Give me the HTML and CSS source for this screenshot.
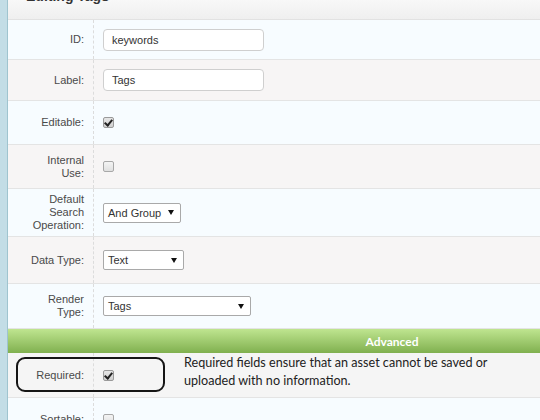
FILE: index.html
```html
<!DOCTYPE html>
<html>
<head>
<meta charset="utf-8">
<link rel="stylesheet" href="styles.css">
</head>
<body>
<div class="page">
  <div class="strip"></div>
  <div class="panel">
    <div class="panel-head"><h2>Editing Tags</h2></div>

    <div class="row blue h-id">
      <div class="lbl">ID:</div>
      <div class="val"><input class="text-input" type="text" value="keywords"></div>
    </div>

    <div class="row gray h-label">
      <div class="lbl">Label:</div>
      <div class="val"><input class="text-input" type="text" value="Tags"></div>
    </div>

    <div class="row blue h-check">
      <div class="lbl">Editable:</div>
      <div class="val"><span class="cb checked"></span></div>
    </div>

    <div class="row gray h-check">
      <div class="lbl">Internal<br>Use:</div>
      <div class="val"><span class="cb"></span></div>
    </div>

    <div class="row blue h-default">
      <div class="lbl">Default<br>Search<br>Operation:</div>
      <div class="val"><div class="select w-and"><span>And Group</span><i class="arrow"></i></div></div>
    </div>

    <div class="row gray h-data">
      <div class="lbl">Data Type:</div>
      <div class="val"><div class="select w-text"><span>Text</span><i class="arrow"></i></div></div>
    </div>

    <div class="row blue h-render">
      <div class="lbl">Render<br>Type:</div>
      <div class="val"><div class="select w-tags"><span>Tags</span><i class="arrow"></i></div></div>
    </div>

    <div class="section">Advanced</div>

    <div class="row req h-req">
      <div class="lbl">Required:</div>
      <div class="val val-req">
        <span class="cb checked"></span>
        <p class="desc">Required fields ensure that an asset cannot be saved or<br>uploaded with no information.</p>
      </div>
      <div class="callout"></div>
    </div>

    <div class="row blue h-check">
      <div class="lbl">Sortable:</div>
      <div class="val"><span class="cb"></span></div>
    </div>
  </div>
</div>
</body>
</html>
```

FILE: styles.css
```css
html, body {
  margin: 0;
  padding: 0;
  overflow: hidden;
  background: #ffffff;
}

body {
  font-family: "Liberation Sans", Arial, sans-serif;
  font-size: 11px;
  color: #444;
}

.page {
  display: flex;
  width: 776px;
  min-height: 420px;
}

.strip {
  flex: 0 0 7px;
  background: #c3dde6;
  border-right: 1px solid #9fc4cf;
}

.panel {
  flex: 1;
  display: flex;
  flex-direction: column;
}

.panel-head {
  box-sizing: border-box;
  height: 20px;
  background: linear-gradient(#f8f8f8, #efefef);
  border-bottom: 1px solid #e2e2e2;
  padding-left: 18px;
  overflow: hidden;
}

.panel-head h2 {
  margin: -12px 0 0 0;
  font-size: 14px;
  line-height: 16px;
  font-weight: bold;
  color: #333;
}

.row {
  position: relative;
  box-sizing: border-box;
  display: grid;
  grid-template-columns: 86px 1fr;
  border-bottom: 1px solid #e4e4e4;
}

.blue { background: #f7fcff; }
.gray { background: #f7f5f5; }
.req  { background: #f5f5f5; }

.h-id      { height: 40px; }
.h-label   { height: 41px; }
.h-check   { height: 44px; }
.h-default { height: 48px; }
.h-data    { height: 47px; }
.h-render  { height: 45px; }
.h-req     { height: 45px; }

.lbl {
  box-sizing: border-box;
  display: flex;
  align-items: center;
  justify-content: flex-end;
  text-align: right;
  padding-right: 9px;
  border-right: 1px dashed #dcdcdc;
  line-height: 13px;
  color: #4a4a4a;
}

.val {
  display: flex;
  align-items: center;
  padding-left: 9px;
}

.text-input {
  box-sizing: border-box;
  width: 161px;
  height: 22px;
  margin: 0;
  padding: 0 0 0 8px;
  border: 1px solid #cfcfcf;
  border-radius: 4px;
  background: #fff;
  font-family: "Liberation Sans", Arial, sans-serif;
  font-size: 11px;
  color: #333;
  outline: none;
}

.cb {
  box-sizing: border-box;
  position: relative;
  display: inline-block;
  width: 11px;
  height: 11px;
  border: 1px solid #a8a8a8;
  border-radius: 2px;
  background: linear-gradient(#f4f4f4, #e0e0e0);
}

.cb.checked {
  background: linear-gradient(#e6e6e6, #cfcfcf);
  border-color: #9a9a9a;
}

.cb.checked::after {
  content: "";
  position: absolute;
  left: 2px;
  top: 0px;
  width: 3px;
  height: 6px;
  border: solid #222;
  border-width: 0 2px 2px 0;
  transform: rotate(40deg);
}

.select {
  box-sizing: border-box;
  display: flex;
  align-items: center;
  justify-content: space-between;
  height: 20px;
  padding: 0 6px 0 4px;
  border: 1px solid #a9a9a9;
  border-radius: 2px;
  background: #fff;
  font-size: 11px;
  color: #333;
}

.w-and  { width: 78px; }
.w-text { width: 81px; }
.w-tags { width: 148px; }

.arrow {
  width: 0;
  height: 0;
  border-left: 3px solid transparent;
  border-right: 3px solid transparent;
  border-top: 5px solid #111;
}

.section {
  box-sizing: border-box;
  height: 24px;
  display: flex;
  align-items: center;
  justify-content: center;
  background: linear-gradient(#bfe590, #80b04f);
  color: #fff;
  font-family: Lato, "Liberation Sans", sans-serif;
  font-weight: bold;
  font-size: 12px;
}

.desc {
  margin: 0 0 0 70px;
  font-family: Lato, "Open Sans", sans-serif;
  font-size: 12.6px;
  line-height: 18px;
  color: #222;
  align-self: flex-start;
  padding-top: 1px;
}

.callout {
  position: absolute;
  left: 8px;
  top: 4px;
  width: 149px;
  height: 35px;
  box-sizing: border-box;
  border: 2px solid #151515;
  border-radius: 9px;
}
```
